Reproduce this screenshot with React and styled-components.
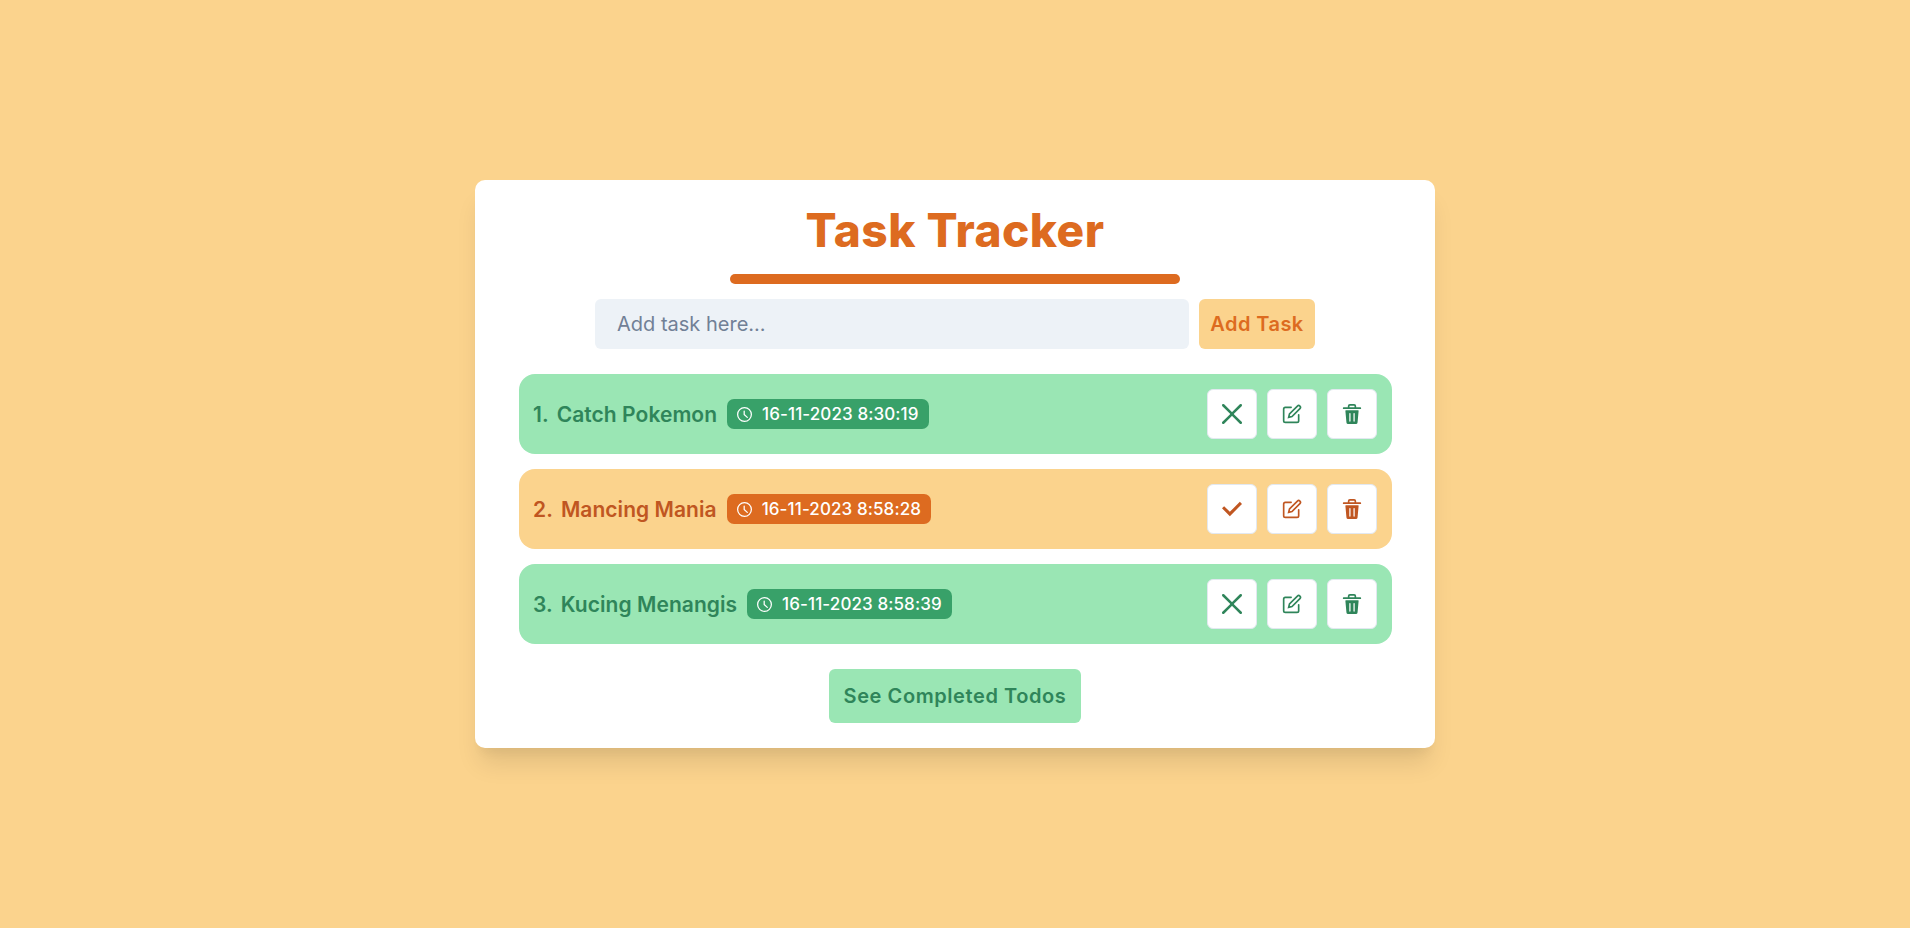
import React from "react";
import styled, { createGlobalStyle } from "styled-components";

const GlobalStyle = createGlobalStyle`
  * {
    box-sizing: border-box;
  }

  html,
  body {
    margin: 0;
    height: 100%;
  }

  body {
    background: #fbd38d;
    font-family: "Inter", "Open Sans", sans-serif;
  }
`;

const CheckIcon = ({ size }) => (
  <svg width={size} height={size} viewBox="0 0 14 14" fill="currentColor">
    <polygon points="5.5 11.9993304 14 3.49933039 12.5 2 5.5 8.99933039 1.5 4.9968652 0 6.49933039" />
  </svg>
);

const CloseIcon = ({ size }) => (
  <svg width={size} height={size} viewBox="0 0 24 24" fill="currentColor">
    <path d="M.439,21.44a1.5,1.5,0,0,0,2.122,2.121L11.823,14.3a.25.25,0,0,1,.354,0l9.262,9.263a1.5,1.5,0,1,0,2.122-2.121L14.3,12.177a.25.25,0,0,1,0-.354l9.263-9.262A1.5,1.5,0,0,0,21.439.44L12.177,9.7a.25.25,0,0,1-.354,0L2.561.44A1.5,1.5,0,0,0,.439,2.561L9.7,11.823a.25.25,0,0,1,0,.354Z" />
  </svg>
);

const EditIcon = ({ size }) => (
  <svg width={size} height={size} viewBox="0 0 24 24" fill="none" stroke="currentColor" strokeWidth="2" strokeLinecap="round">
    <path d="M11 4H4a2 2 0 0 0-2 2v14a2 2 0 0 0 2 2h14a2 2 0 0 0 2-2v-7" />
    <path d="M18.5 2.5a2.121 2.121 0 0 1 3 3L12 15l-4 1 1-4 9.5-9.5z" />
  </svg>
);

const DeleteIcon = ({ size }) => (
  <svg width={size} height={size} viewBox="0 0 24 24" fill="currentColor">
    <path d="M19.452 7.5H4.547a.5.5 0 00-.5.545l1.287 14.136A2 2 0 007.326 24h9.347a2 2 0 001.992-1.819L19.95 8.045a.5.5 0 00-.129-.382.5.5 0 00-.369-.163zm-9.2 13a.75.75 0 01-1.5 0v-9a.75.75 0 011.5 0zm5 0a.75.75 0 01-1.5 0v-9a.75.75 0 011.5 0zM22 4h-4.75a.25.25 0 01-.25-.25V2.5A2.5 2.5 0 0014.5 0h-5A2.5 2.5 0 007 2.5v1.25a.25.25 0 01-.25.25H2a1 1 0 000 2h20a1 1 0 000-2zM9 3.75V2.5a.5.5 0 01.5-.5h5a.5.5 0 01.5.5v1.25a.25.25 0 01-.25.25h-5.5A.25.25 0 019 3.75z" />
  </svg>
);

const TimeIcon = ({ size }) => (
  <svg width={size} height={size} viewBox="0 0 24 24" fill="currentColor">
    <path d="M12,0A12,12,0,1,0,24,12,12.014,12.014,0,0,0,12,0Zm0,22A10,10,0,1,1,22,12,10.011,10.011,0,0,1,12,22Z" />
    <path d="M17.134,15.81,12.5,11.561V6.5a1,1,0,0,0-2,0V12a1,1,0,0,0,.324.738l4.959,4.545a1.01,1.01,0,0,0,1.413-.061A1,1,0,0,0,17.134,15.81Z" />
  </svg>
);

const todos = [
  { id: 1, title: "Catch Pokemon", time: "16-11-2023 8:30:19", done: true },
  { id: 2, title: "Mancing Mania", time: "16-11-2023 8:58:28", done: false },
  { id: 3, title: "Kucing Menangis", time: "16-11-2023 8:58:39", done: true },
];

function App() {
  return (
    <>
      <GlobalStyle />
      <Page>
        <Card>
          <Title>Task Tracker</Title>
          <Divider />
          <AddForm>
            <TaskInput placeholder="Add task here..." />
            <AddButton>Add Task</AddButton>
          </AddForm>
          <TodoList>
            {todos.map((todo) => (
              <TodoRow key={todo.id} $done={todo.done}>
                <TodoText $done={todo.done}>
                  <Num>{todo.id}.</Num>
                  <span>{todo.title}</span>
                  <Badge $done={todo.done}>
                    <TimeIcon size={15} />
                    <span>{todo.time}</span>
                  </Badge>
                </TodoText>
                <Actions $done={todo.done}>
                  <IconButton>
                    {todo.done ? <CloseIcon size={20} /> : <CheckIcon size={20} />}
                  </IconButton>
                  <IconButton>
                    <EditIcon size={20} />
                  </IconButton>
                  <IconButton>
                    <DeleteIcon size={20} />
                  </IconButton>
                </Actions>
              </TodoRow>
            ))}
          </TodoList>
          <CompletedButton>See Completed Todos</CompletedButton>
        </Card>
      </Page>
    </>
  );
}

const Page = styled.div`
  display: flex;
  justify-content: center;
  padding-top: 180px;
  min-height: 928px;
`;

const Card = styled.div`
  width: 960px;
  height: 568px;
  padding: 25px 44px;
  background: #fff;
  border-radius: 10px;
  box-shadow: 0 20px 25px -5px rgba(0, 0, 0, 0.1), 0 10px 10px -5px rgba(0, 0, 0, 0.04);
  display: flex;
  flex-direction: column;
  align-items: center;
`;

const Title = styled.h1`
  margin: 0;
  font-size: 46px;
  line-height: 50px;
  font-weight: 800;
  color: #dd6b20;
  letter-spacing: 0.5px;
`;

const Divider = styled.div`
  width: 450px;
  height: 10px;
  margin-top: 19px;
  border-radius: 5px;
  background: #dd6b20;
`;

const AddForm = styled.div`
  display: flex;
  gap: 10px;
  margin-top: 15px;
`;

const TaskInput = styled.input`
  width: 594px;
  height: 50px;
  padding: 0 22px;
  border: none;
  border-radius: 6px;
  background: #edf2f7;
  font-family: inherit;
  font-size: 20px;
  color: #2d3748;

  &::placeholder {
    color: #718096;
    opacity: 1;
  }
`;

const AddButton = styled.button`
  width: 116px;
  height: 50px;
  padding: 0;
  border: none;
  border-radius: 6px;
  background: #fbd38d;
  color: #dd6b20;
  font-family: inherit;
  font-size: 20px;
  font-weight: 600;
  letter-spacing: 0.45px;
`;

const TodoList = styled.div`
  display: flex;
  flex-direction: column;
  gap: 15px;
  align-self: flex-start;
  width: 873px;
  margin-top: 25px;
`;

const TodoRow = styled.div`
  display: flex;
  align-items: center;
  justify-content: space-between;
  height: 80px;
  padding: 0 15px 0 14px;
  border-radius: 16px;
  background: ${({ $done }) => ($done ? "#9ae6b4" : "#fbd38d")};
`;

const TodoText = styled.div`
  display: flex;
  align-items: center;
  font-size: 21px;
  font-weight: 600;
  letter-spacing: 0.05px;
  color: ${({ $done }) => ($done ? "#2f855a" : "#c05621")};
`;

const Num = styled.span`
  margin-right: 8px;
`;

const Badge = styled.span`
  display: flex;
  align-items: center;
  gap: 10px;
  height: 30px;
  margin-left: 10px;
  padding: 0 10px;
  border-radius: 7px;
  background: ${({ $done }) => ($done ? "#38a169" : "#dd6b20")};
  color: #fff;
  font-size: 17px;
  font-weight: 500;
  letter-spacing: 0.1px;
`;

const Actions = styled.div`
  display: flex;
  gap: 10px;
  color: ${({ $done }) => ($done ? "#2f855a" : "#c05621")};
`;

const IconButton = styled.button`
  display: flex;
  align-items: center;
  justify-content: center;
  width: 50px;
  height: 50px;
  padding: 0;
  border: 1px solid #e2e8f0;
  border-radius: 6px;
  background: #fff;
  color: inherit;
`;

const CompletedButton = styled.button`
  width: 252px;
  height: 54px;
  margin-top: 25px;
  padding: 0;
  border: none;
  border-radius: 6px;
  background: #9ae6b4;
  color: #2f855a;
  font-family: inherit;
  font-size: 20px;
  font-weight: 600;
  letter-spacing: 0.58px;
`;

export default App;
